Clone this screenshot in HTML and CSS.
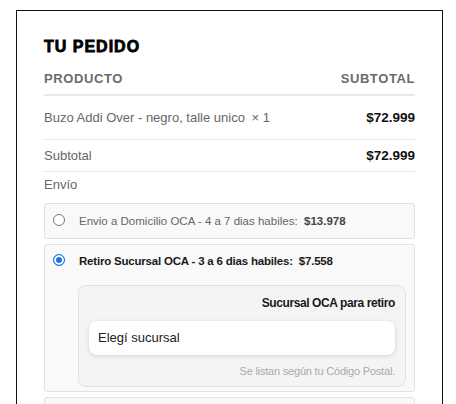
FILE: index.html
```html
<!DOCTYPE html>
<html lang="es">
<head>
    <meta charset="UTF-8">
    <title>Tu pedido</title>
    <link rel="stylesheet" href="styles.css">
</head>
<body>
    <div class="order">
        <h3 class="order-title">TU PEDIDO</h3>
        <div class="row head-row">
            <span>PRODUCTO</span>
            <span>SUBTOTAL</span>
        </div>
        <div class="row item-row">
            <span class="item-name">Buzo Addi Over - negro, talle unico <span class="qty">&times; 1</span></span>
            <span class="price">$72.999</span>
        </div>
        <div class="row subtotal-row">
            <span>Subtotal</span>
            <span class="price">$72.999</span>
        </div>
        <div class="shipping-label">Envío</div>
        <!-- shipping methods -->
        <div class="method">
            <div class="method-head">
                <span class="radio"></span>
                <span class="method-text">Envio a Domicilio OCA - 4 a 7 dias habiles:&nbsp; <b>$13.978</b></span>
            </div>
        </div>
        <div class="method selected">
            <div class="method-head">
                <span class="radio checked"></span>
                <span class="method-text">Retiro Sucursal OCA - 3 a 6 dias habiles:&nbsp; <b>$7.558</b></span>
            </div>
            <div class="branch-panel">
                <div class="branch-label">Sucursal OCA para retiro</div>
                <div class="branch-select">Elegí sucursal</div>
                <div class="branch-hint">Se listan según tu Código Postal.</div>
            </div>
        </div>
        <div class="method"></div>
    </div>
</body>
</html>
```

FILE: styles.css
```css
body {
    margin: 0;
    padding: 10px 13px 0 16px;
    background: #fff;
    font-family: 'Liberation Sans', Arial, sans-serif;
    color: #666;
    overflow: hidden;
    height: 394px;
}
.order {
    border: 1px solid #111;
    border-bottom: none;
    padding: 27px 27px 0 27px;
    height: 400px;
}
.order-title {
    margin: 0;
    font-family: 'Liberation Sans', Arial, sans-serif;
    font-weight: 900;
    font-size: 16px;
    line-height: 18px;
    color: #000;
    letter-spacing: 1px;
    -webkit-text-stroke: 0.8px #000;
}
.row {
    display: flex;
    justify-content: space-between;
    align-items: center;
}
.head-row {
    margin-top: 8px;
    height: 28px;
    padding-bottom: 2px;
    border-bottom: 2px solid #e8e8e8;
    font-size: 13px;
    font-weight: bold;
    letter-spacing: 0.6px;
    color: #6b6b6b;
}
.item-row {
    height: 43px;
    border-bottom: 1px solid #e8e8e8;
    font-size: 13px;
}
.qty {
    margin-left: 3px;
}
.price {
    font-weight: bold;
    font-size: 13.5px;
    color: #111;
}
.subtotal-row {
    height: 31px;
    border-bottom: 1px solid #e8e8e8;
    font-size: 13px;
}
.shipping-label {
    height: 26px;
    line-height: 26px;
    font-size: 13px;
    margin-bottom: 5px;
}
.method {
    border: 1px solid #e2e2e2;
    border-radius: 3px;
    background: #f9f9f9;
    margin-bottom: 5px;
    min-height: 34px;
}
.method-head {
    display: flex;
    align-items: center;
    height: 34px;
    padding-left: 8px;
}
.method.selected .method-head {
    height: 28px;
    padding-top: 2px;
}
.radio {
    width: 10px;
    height: 10px;
    border: 1px solid #767676;
    border-radius: 50%;
    background: #fff;
    margin-top: -3px;
    box-sizing: content-box;
}
.radio.checked {
    border-color: #1a73e8;
    background: #1a73e8;
    box-shadow: inset 0 0 0 2px #fff;
}
.method-text {
    margin-left: 14px;
    font-size: 11.5px;
    color: #666;
}
.method-text b {
    color: #444;
}
.selected .method-text {
    color: #1a1a1a;
    font-weight: bold;
    letter-spacing: -0.2px;
}
.selected .method-text b {
    color: #1a1a1a;
}
.branch-panel {
    margin: 10px 8px 4px 33px;
    border: 1px solid #e2e2e2;
    border-radius: 8px;
    background: #f4f4f4;
    padding: 9px 10px 8px 10px;
}
.branch-label {
    text-align: right;
    font-size: 12px;
    font-weight: bold;
    letter-spacing: -0.4px;
    color: #1a1a1a;
    line-height: 16px;
}
.branch-select {
    margin-top: 10px;
    height: 34px;
    line-height: 34px;
    background: #fff;
    border-radius: 8px;
    box-shadow: 0 1px 4px rgba(0, 0, 0, 0.15);
    padding-left: 9px;
    font-size: 13px;
    color: #222;
}
.branch-hint {
    margin-top: 9px;
    text-align: right;
    font-size: 11px;
    letter-spacing: -0.2px;
    color: #aaa;
    line-height: 14px;
}
```
